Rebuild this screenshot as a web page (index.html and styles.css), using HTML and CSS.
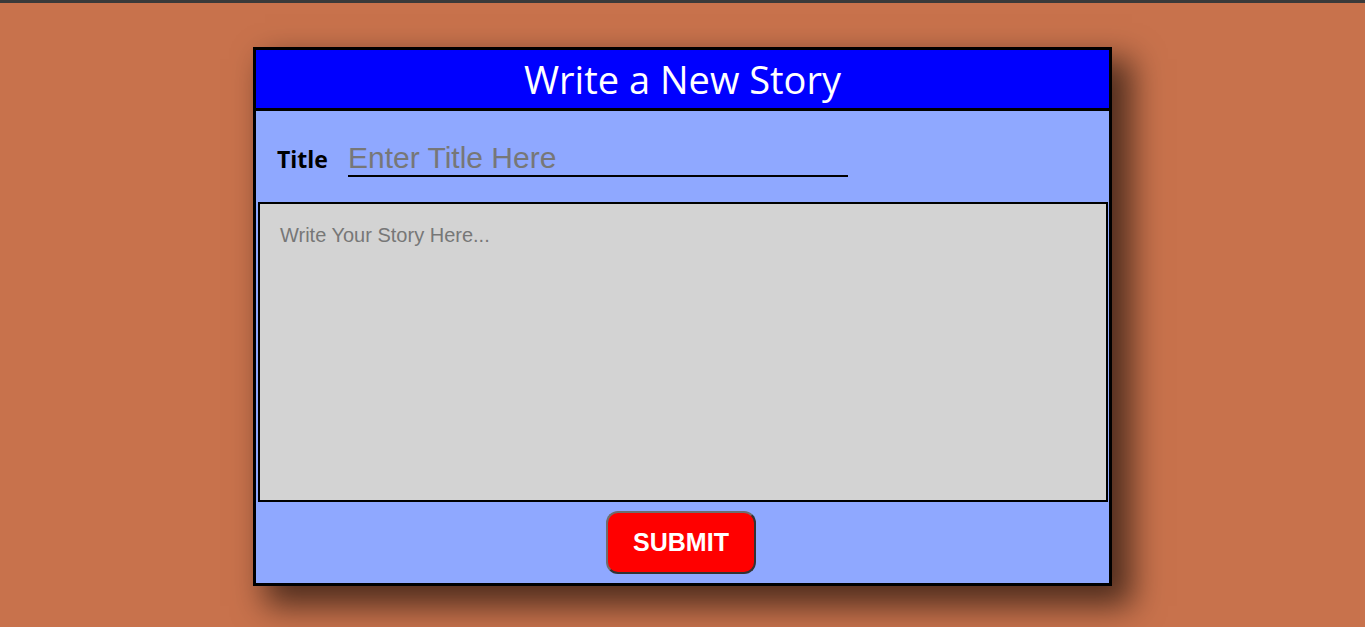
FILE: index.html
```html
<!DOCTYPE html>
<html lang="en">
<head>
<meta charset="utf-8">
<title>Write a New Story</title>
<link rel="stylesheet" href="styles.css">
</head>
<body>
<div class="page">
  <form class="card">
    <div class="card-header">Write a New Story</div>
    <div class="card-body">
      <div class="title-row">
        <label class="title-label" for="title">Title</label>
        <input class="title-input" id="title" type="text" placeholder="Enter Title Here">
      </div>
      <textarea class="story" placeholder="Write Your Story Here..."></textarea>
      <div class="actions">
        <button class="submit" type="button">SUBMIT</button>
      </div>
    </div>
  </form>
</div>
</body>
</html>
```
FILE: styles.css
```css
html, body {
  margin: 0;
  padding: 0;
}
body {
  background: #c8724c;
  border-top: 3px solid #3a3a3a;
  min-height: 100vh;
  box-sizing: border-box;
}
.page {
  display: flex;
  justify-content: center;
  padding-top: 44px;
}
.card {
  width: 853px;
  border: 3px solid #000;
  box-shadow: 16px 16px 30px 4px rgba(0, 0, 0, 0.6);
  margin: 0;
}
.card-header {
  height: 58px;
  background: #0000ff;
  border-bottom: 3px solid #000;
  color: #fff;
  font-family: "Open Sans", sans-serif;
  font-size: 38px;
  display: flex;
  align-items: center;
  justify-content: center;
  line-height: 1;
}
.card-body {
  background: #8fa8ff;
  padding-top: 30px;
  padding-bottom: 9px;
}
.title-row {
  display: flex;
  align-items: baseline;
  gap: 20px;
  padding-left: 21px;
}
.title-label {
  font-family: "Open Sans", sans-serif;
  font-weight: 700;
  font-size: 23px;
  color: #000;
}
.title-input {
  width: 500px;
  height: 36px;
  box-sizing: border-box;
  border: none;
  border-bottom: 2px solid #000;
  background: transparent;
  padding: 0;
  font-family: "Liberation Sans", Arial, sans-serif;
  font-size: 30px;
  outline: none;
}
.title-input::placeholder {
  color: #777;
}
.story {
  display: block;
  box-sizing: border-box;
  width: 850px;
  height: 300px;
  margin: 25px 0 0 2px;
  border: 2px solid #000;
  background: #d3d3d3;
  padding: 20px 20px;
  font-family: "Liberation Sans", Arial, sans-serif;
  font-size: 20px;
  resize: none;
  outline: none;
}
.story::placeholder {
  color: #777;
}
.actions {
  display: flex;
  justify-content: center;
  margin-top: 9px;
  padding-right: 3px;
}
.submit {
  width: 150px;
  height: 63px;
  box-sizing: border-box;
  background: #ff0000;
  color: #fff;
  border: 2px solid;
  border-color: #6e6e6e #333 #333 #6e6e6e;
  border-radius: 12px;
  font-family: "Liberation Sans", Arial, sans-serif;
  font-weight: 700;
  font-size: 25px;
  cursor: pointer;
}
```
